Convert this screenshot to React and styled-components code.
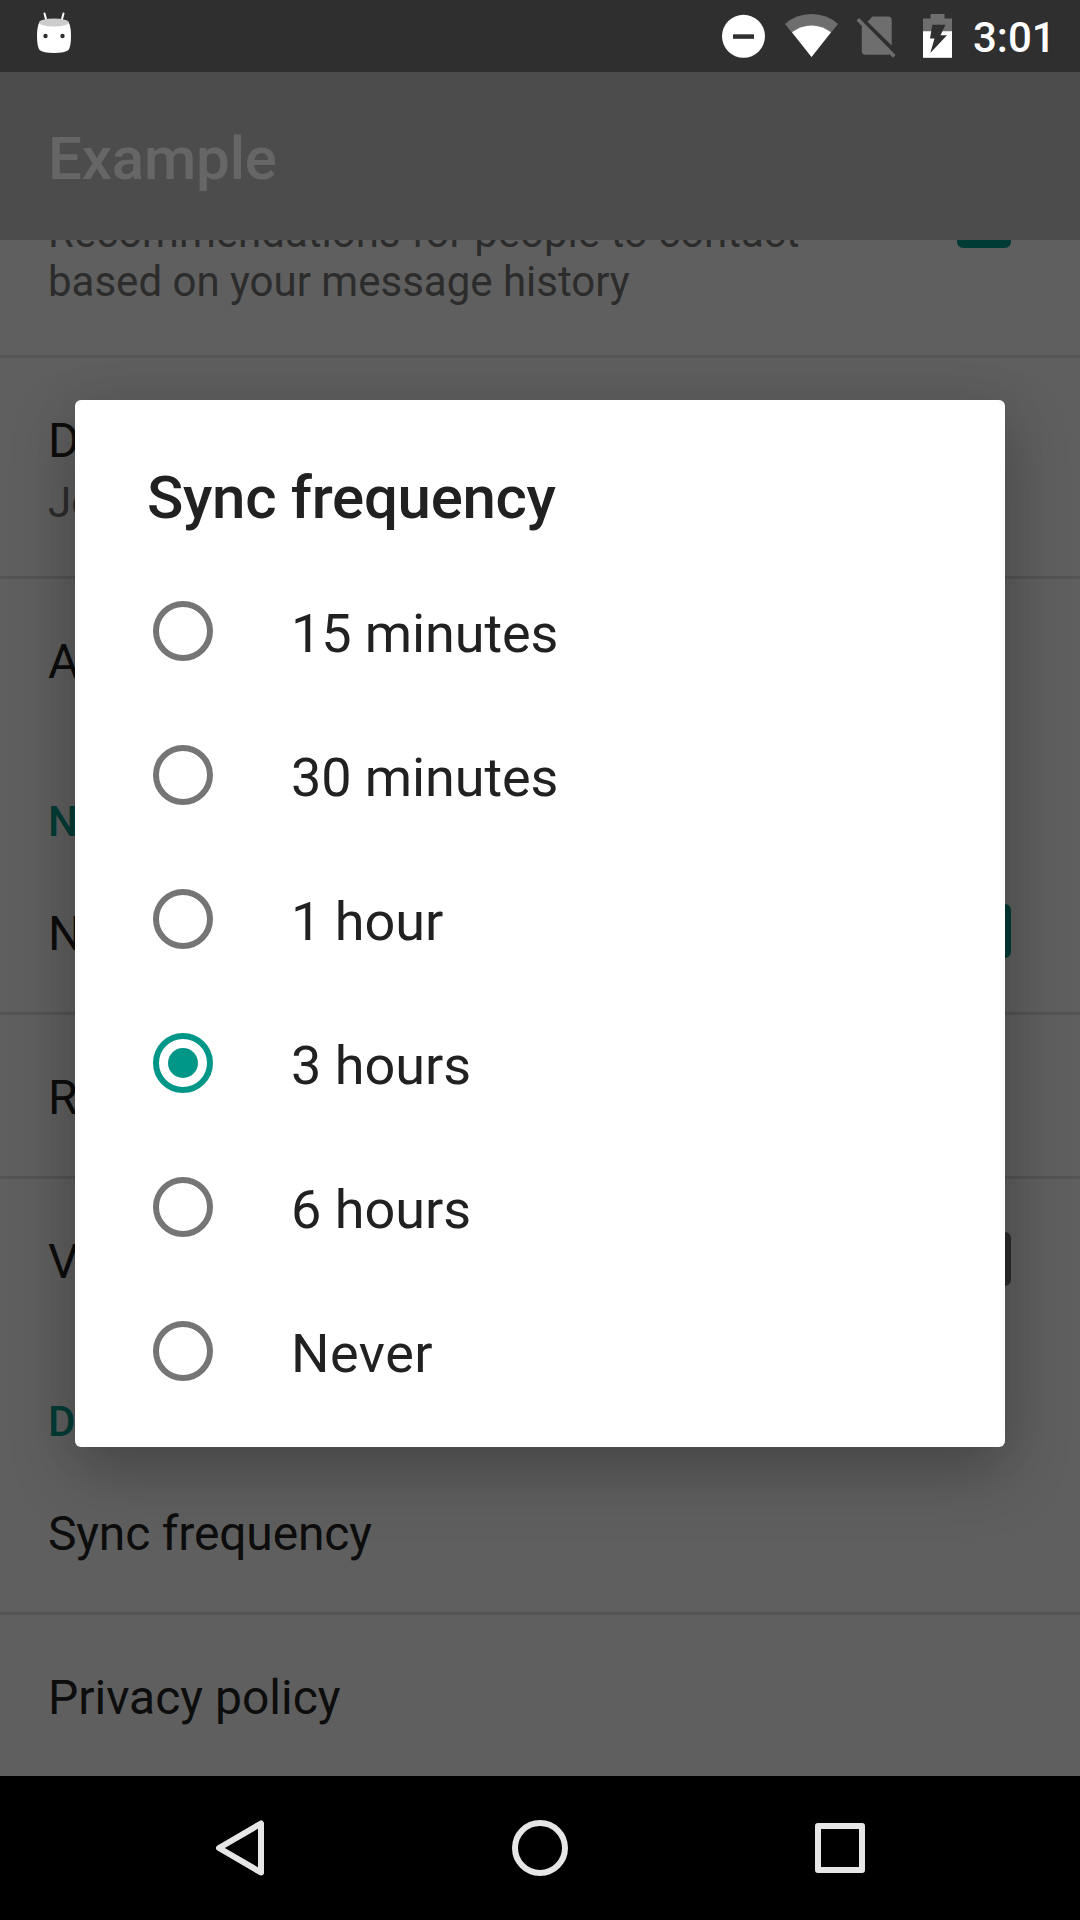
import React from 'react';
import styled, { createGlobalStyle } from 'styled-components';

const GlobalStyle = createGlobalStyle`
  * { box-sizing: border-box; }
  body { margin: 0; background: #000; font-family: Roboto, "Noto Sans", sans-serif; }
`;

const Screen = styled.div`
  position: relative;
  display: flex;
  flex-direction: column;
  width: 1080px;
  height: 1920px;
  overflow: hidden;
`;

const StatusBar = styled.header`
  flex: none;
  display: flex;
  align-items: flex-start;
  justify-content: space-between;
  height: 72px;
  padding: 0 26px 0 36px;
  background: #2f2f2f;
`;

const StatusIcons = styled.div`
  display: flex;
  align-items: flex-start;
`;

const Clock = styled.span`
  width: 81px;
  margin-left: 21px;
  color: #fff;
  font-size: 42px;
  font-weight: 500;
  line-height: 75px;
  white-space: nowrap;
`;

const Window = styled.div`
  position: relative;
  flex: none;
  display: flex;
  flex-direction: column;
  height: 1704px;
  background: #eee;
`;

const AppBar = styled.div`
  flex: none;
  height: 168px;
  padding: 2px 48px 0;
  background: #bdbdbd;
  color: #fff;
  font-size: 60px;
  font-weight: 500;
  letter-spacing: -0.15px;
  line-height: 170px;
`;

const Settings = styled.main`
  flex: 1;
  display: flex;
  flex-direction: column;
  justify-content: flex-end;
  overflow: hidden;
`;

const Row = styled.div`
  flex: none;
  display: flex;
  align-items: center;
  justify-content: space-between;
  height: ${(p) => p.$height || 161}px;
  padding: 0 69px 0 48px;
`;

const Divider = styled.div`
  flex: none;
  height: 3px;
  background: #d2d2d2;
`;

const Labels = styled.div`
  width: 820px;
  padding-top: 4px;
`;

const Title = styled.div`
  color: #212121;
  font-size: 48px;
  letter-spacing: ${(p) => p.$tracking || 0}px;
  line-height: 57px;
`;

const Summary = styled.div`
  padding-top: 9px;
  color: #6e6e6e;
  font-size: 42px;
  line-height: 49px;
`;

const SectionTitle = styled.div`
  flex: none;
  height: 111px;
  padding: 57px 48px 0;
  color: #009688;
  font-size: 42px;
  font-weight: 500;
  line-height: 49px;
`;

const Checkbox = styled.span`
  flex: none;
  width: 54px;
  height: 54px;
  margin-bottom: 1px;
  border: 6px solid ${(p) => (p.$checked ? '#009688' : '#6e6e6e')};
  border-radius: 6px;
  background: ${(p) => (p.$checked ? '#009688' : 'transparent')};
`;

const Scrim = styled.div`
  position: absolute;
  inset: 0;
  display: flex;
  align-items: flex-start;
  justify-content: center;
  padding-top: 328px;
  background: rgba(0, 0, 0, 0.6);
`;

const Dialog = styled.section`
  width: 930px;
  height: 1047px;
  padding-bottom: 24px;
  border-radius: 6px;
  background: #fff;
  box-shadow: 0 26px 66px rgba(0, 0, 0, 0.24), 0 0 50px rgba(0, 0, 0, 0.07);
`;

const DialogTitle = styled.h2`
  height: 159px;
  margin: 0;
  padding: 63px 72px 0;
  color: #212121;
  font-size: 60px;
  font-weight: 500;
  letter-spacing: -0.3px;
  line-height: 70px;
`;

const Option = styled.div`
  display: flex;
  align-items: center;
  height: 144px;
  padding-left: 78px;
`;

const Radio = styled.span`
  flex: none;
  display: flex;
  align-items: center;
  justify-content: center;
  width: 60px;
  height: 60px;
  border: 6px solid ${(p) => (p.$checked ? '#009688' : '#757575')};
  border-radius: 50%;
`;

const RadioDot = styled.span`
  width: 30px;
  height: 30px;
  border-radius: 50%;
  background: #009688;
`;

const OptionLabel = styled.span`
  margin-left: 78px;
  padding-top: 5px;
  color: #212121;
  font-size: 54px;
  letter-spacing: ${(p) => p.$tracking}px;
  line-height: 64px;
`;

const NavBar = styled.nav`
  flex: none;
  display: flex;
  align-items: center;
  justify-content: center;
  gap: 220px;
  height: 144px;
  background: #000;
`;

const NavIcon = styled.svg`
  flex: none;
  width: 80px;
  height: 80px;
  fill: none;
  stroke: #e6e6e6;
  stroke-width: 6;
  stroke-linejoin: round;
`;

const DebugIcon = () => (
  <svg width="36" height="60" viewBox="36 0 36 60">
    <path d="M44.5 13.5 L46.5 21 M63.5 13.5 L61.5 21" stroke="#fff" strokeWidth="2" strokeLinecap="round" />
    <path d="M39 23 Q37 27 37 36 Q37 46 39.5 50 Q43 53 54 53 Q65 53 68.5 50 Q71 46 71 36 Q71 27 69 23 Z" fill="#fff" />
    <ellipse cx="54" cy="22.5" rx="15" ry="4" fill="#ccc" />
    <circle cx="45.5" cy="36" r="2.2" fill="#2f2f2f" />
    <circle cx="62.5" cy="36" r="2.2" fill="#2f2f2f" />
  </svg>
);

const SystemIcons = () => (
  <svg width="232" height="72" viewBox="720 0 232 72">
    <circle cx="743.5" cy="36.3" r="21.5" fill="#fff" />
    <rect x="733" y="34.3" width="21" height="4.5" fill="#2f2f2f" />
    <path d="M811.5 57 L785 24 Q796 14 811.5 14 Q827 14 838 24 Z" fill="#6e6e6e" />
    <path d="M811.5 57 L792 32.3 Q801 25.6 811.5 25.6 Q822 25.6 831 32.3 Z" fill="#fff" />
    <path d="M867.5 21.7 L872.5 16.5 H888 Q891.7 16.5 891.7 20.2 V45.6 Z" fill="#6e6e6e" />
    <path
      d="M856.5 20.6 L859.1 18 L895.6 55 L893 57.7 L889.6 54.3 Q888.6 54.8 887.5 54.8 H865.5 Q861.8 54.8 861.8 51 V26 Z"
      fill="#6e6e6e"
    />
    <path d="M923 31.2 V18.5 H930.5 V14 H944.5 V18.5 H952 V31.2 Z" fill="#6e6e6e" />
    <rect x="923" y="31.2" width="29" height="26.6" fill="#fff" />
    <path d="M932.3 24.7 H945.5 L940.5 35.3 H947 L930.3 53 L934.5 38.5 H930 Z" fill="#2f2f2f" />
  </svg>
);

const options = [
  { label: '15 minutes', tracking: -0.1 },
  { label: '30 minutes', tracking: -0.1 },
  { label: '1 hour', tracking: 0 },
  { label: '3 hours', tracking: 0 },
  { label: '6 hours', tracking: 0 },
  { label: 'Never', tracking: 0.5 },
];

export default function App() {
  return (
    <Screen>
      <GlobalStyle />
      <StatusBar>
        <DebugIcon />
        <StatusIcons>
          <SystemIcons />
          <Clock>3:01</Clock>
        </StatusIcons>
      </StatusBar>
      <Window>
        <AppBar>Example</AppBar>
        <Settings>
          <Row $height={267}>
            <Labels>
              <Title>Contact suggestions</Title>
              <Summary>Recommendations for people to contact based on your message history</Summary>
            </Labels>
            <Checkbox $checked />
          </Row>
          <Divider />
          <Row $height={218}>
            <Labels>
              <Title>Display name</Title>
              <Summary>John Smith</Summary>
            </Labels>
          </Row>
          <Divider />
          <Row><Labels><Title>Add friends</Title></Labels></Row>
          <SectionTitle>Notifications</SectionTitle>
          <Row>
            <Labels><Title>New message</Title></Labels>
            <Checkbox $checked />
          </Row>
          <Divider />
          <Row><Labels><Title>Ringtone</Title></Labels></Row>
          <Divider />
          <Row>
            <Labels><Title>Vibrate</Title></Labels>
            <Checkbox />
          </Row>
          <SectionTitle>Data &amp; sync</SectionTitle>
          <Row><Labels><Title $tracking={-0.18}>Sync frequency</Title></Labels></Row>
          <Divider />
          <Row><Labels><Title>Privacy policy</Title></Labels></Row>
        </Settings>
        <Scrim>
          <Dialog>
            <DialogTitle>Sync frequency</DialogTitle>
            {options.map(({ label, tracking }) => (
              <Option key={label}>
                <Radio $checked={label === '3 hours'}>{label === '3 hours' && <RadioDot />}</Radio>
                <OptionLabel $tracking={tracking}>{label}</OptionLabel>
              </Option>
            ))}
          </Dialog>
        </Scrim>
      </Window>
      <NavBar>
        <NavIcon viewBox="200 1808 80 80">
          <path d="M261 1823.5 V1872.5 L219 1848 Z" />
        </NavIcon>
        <NavIcon viewBox="500 1808 80 80">
          <circle cx="540" cy="1848" r="25" />
        </NavIcon>
        <NavIcon viewBox="800 1808 80 80">
          <rect x="818" y="1826" width="44" height="44" />
        </NavIcon>
      </NavBar>
    </Screen>
  );
}
